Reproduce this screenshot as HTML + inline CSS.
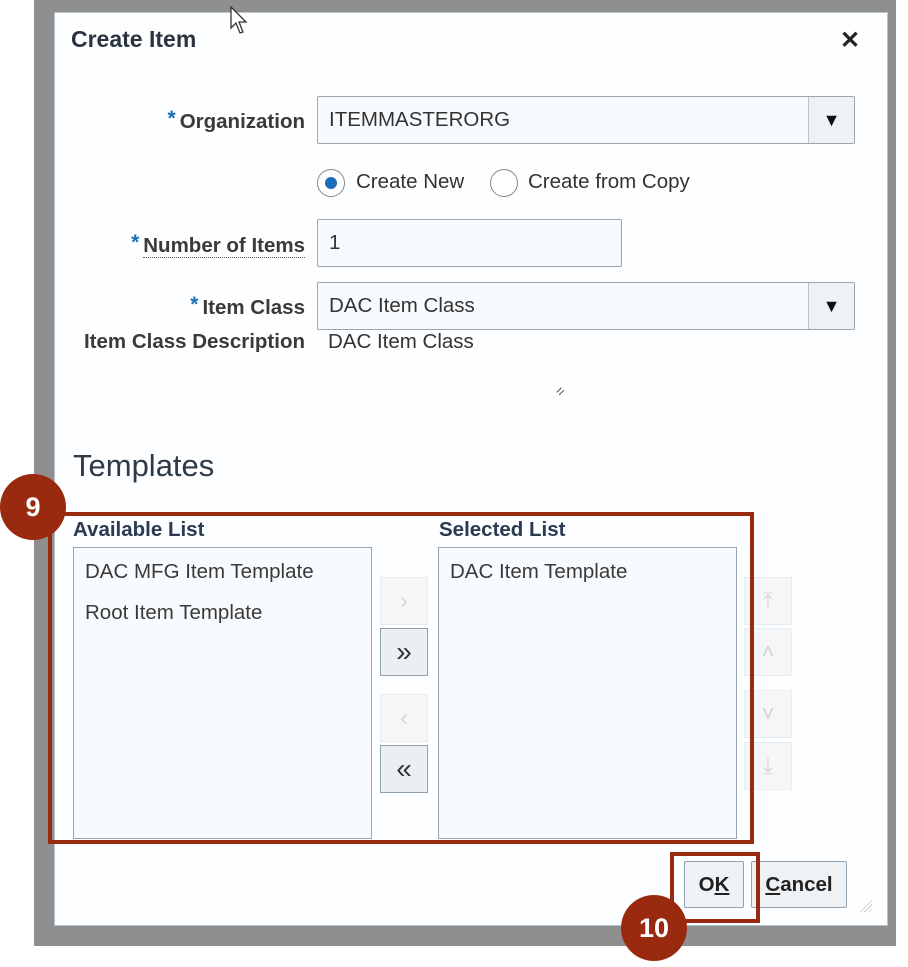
<!DOCTYPE html>
<html><head><style>
*{margin:0;padding:0;box-sizing:border-box}
body{width:908px;height:967px;background:#fff;position:relative;overflow:hidden;font-family:"Liberation Sans",Arial,sans-serif;color:#333}
.a{position:absolute}
.gray{left:34px;top:0;width:862px;height:946px;background:#8f8f8f}
.dlg{left:54px;top:12px;width:834px;height:914px;background:#fdfeff;border:1px solid #b8c4cc}
.lbl{font-size:20.5px;color:#3a3a3a;text-align:right;white-space:nowrap}
.b{font-weight:bold}
.star{color:#1a6fb8;font-size:21px;font-weight:bold;vertical-align:3px;margin-right:4px}
.inp{border:1px solid #9aa6ae;border-radius:2px;background:#f8fbfd;font-size:20.5px;padding-left:11px;color:#333}
.dd{position:absolute;right:0;top:0;width:46px;height:100%;border-left:1px solid #b9c4cc;background:#eef2f5;display:flex;align-items:center;justify-content:center;font-size:18px;color:#111}
.list{border:1px solid #9aa6ae;background:#f8fbfd;font-size:20.5px;color:#3a3a3a}
.sb{width:48px;height:48px;border:1px solid #e8ecee;background:#f4f6f7;color:#d0d4d6;display:flex;align-items:center;justify-content:center;font-size:22px}
.sb.on{border:1px solid #8fa2b0;background:#eceff1;color:#333;font-size:28px}
.red{border:4px solid #992a0f}
.circ{width:66px;height:66px;border-radius:50%;background:#992a0f;color:#fff;font-weight:bold;font-size:27px;display:flex;align-items:center;justify-content:center}
.btn{border:1px solid #8ea2b2;background:#eef2f5;border-radius:2px;font-weight:bold;font-size:20.5px;color:#222;display:flex;align-items:center;justify-content:center}
</style></head><body>
<div class="a gray"></div>
<div class="a dlg"></div>
<div class="a b" style="left:71px;top:26px;font-size:23px;color:#2a3440">Create Item</div>
<div class="a b" style="left:840px;top:26px;font-size:24px;color:#222">✕</div>
<svg class="a" style="left:229px;top:6px" width="22" height="30" viewBox="0 0 22 30"><path d="M2 1 L2 22 L7 17 L11 27 L14 26 L10 16 L17 16 Z" fill="#fff" stroke="#333" stroke-width="1.3"/></svg>

<div class="a lbl" style="right:603px;top:107px"><span class="star">*</span><span class="b">Organization</span></div>
<div class="a inp" style="left:317px;top:96px;width:538px;height:48px;line-height:46px">ITEMMASTERORG<div class="dd">▼</div></div>

<div class="a" style="left:317px;top:169px;width:28px;height:28px;border-radius:50%;border:1px solid #888;background:#fff"><div style="position:absolute;left:7px;top:7px;width:12px;height:12px;border-radius:50%;background:#1a6fb8"></div></div>
<div class="a" style="left:356px;top:170px;font-size:20.5px">Create New</div>
<div class="a" style="left:490px;top:169px;width:28px;height:28px;border-radius:50%;border:1px solid #888;background:#fff"></div>
<div class="a" style="left:528px;top:170px;font-size:20.5px">Create from Copy</div>

<div class="a lbl" style="right:603px;top:231px"><span class="star">*</span><span class="b" style="border-bottom:1px dotted #555">Number of Items</span></div>
<div class="a inp" style="left:317px;top:219px;width:305px;height:48px;line-height:46px">1</div>

<div class="a lbl" style="right:603px;top:293px"><span class="star">*</span><span class="b">Item Class</span></div>
<div class="a inp" style="left:317px;top:282px;width:538px;height:48px;line-height:46px">DAC Item Class<div class="dd">▼</div></div>
<div class="a lbl b" style="right:603px;top:330px">Item Class Description</div>
<div class="a" style="left:328px;top:330px;font-size:20.5px;color:#333">DAC Item Class</div>
<div class="a" style="left:556px;top:383px;font-size:14px;color:#555;transform:rotate(-45deg)">=</div>

<div class="a" style="left:73px;top:448px;font-size:31px;color:#2d3a48">Templates</div>

<div class="a b" style="left:73px;top:518px;font-size:20.5px;color:#2a3a50">Available List</div>
<div class="a b" style="left:439px;top:518px;font-size:20.5px;color:#2a3a50">Selected List</div>
<div class="a list" style="left:73px;top:547px;width:299px;height:292px"><div style="position:absolute;left:11px;top:12px">DAC MFG Item Template</div><div style="position:absolute;left:11px;top:53px">Root Item Template</div></div>
<div class="a list" style="left:438px;top:547px;width:299px;height:292px"><div style="position:absolute;left:11px;top:12px">DAC Item Template</div></div>

<div class="a sb" style="left:380px;top:577px">›</div>
<div class="a sb on" style="left:380px;top:628px">»</div>
<div class="a sb" style="left:380px;top:694px">‹</div>
<div class="a sb on" style="left:380px;top:745px">«</div>
<div class="a sb" style="left:744px;top:577px">⤒</div>
<div class="a sb" style="left:744px;top:628px">˄</div>
<div class="a sb" style="left:744px;top:690px">˅</div>
<div class="a sb" style="left:744px;top:742px">⤓</div>

<div class="a red" style="left:48px;top:512px;width:706px;height:332px"></div>
<div class="a circ" style="left:0px;top:474px">9</div>

<div class="a btn" style="left:684px;top:861px;width:60px;height:47px"><span>O<u>K</u></span></div>
<div class="a btn" style="left:751px;top:861px;width:96px;height:47px"><span><u>C</u>ancel</span></div>
<div class="a red" style="left:670px;top:852px;width:90px;height:71px"></div>
<div class="a circ" style="left:621px;top:895px">10</div>
<div class="a" style="left:858px;top:898px;width:14px;height:14px;background:repeating-linear-gradient(135deg,transparent 0 2px,#ccc 2px 3px);clip-path:polygon(100% 0,100% 100%,0 100%)"></div>
</body></html>
